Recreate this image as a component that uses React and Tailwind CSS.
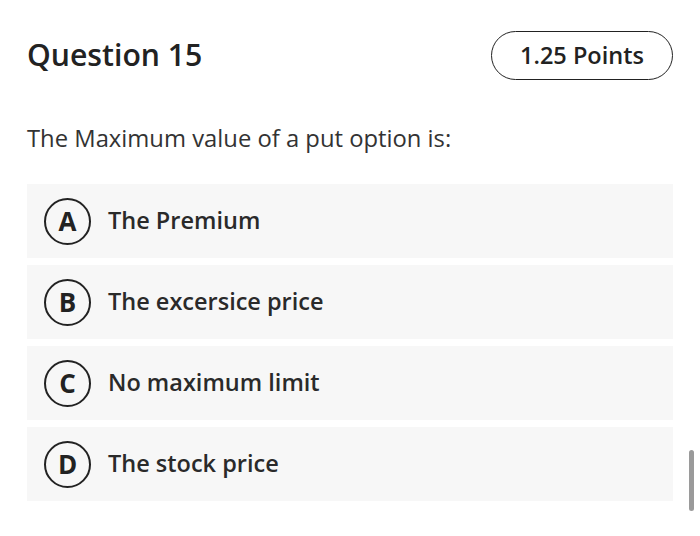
import React from "react";

const options = [
  { letter: "A", text: "The Premium" },
  { letter: "B", text: "The excersice price" },
  { letter: "C", text: "No maximum limit" },
  { letter: "D", text: "The stock price" },
];

const App = () => {
  return (
    <div
      className="relative w-[700px] h-[536px] bg-white overflow-hidden text-[#222]"
      style={{ fontFamily: '"Open Sans", "Noto Sans", sans-serif' }}
    >
      <div className="px-[27px] pt-[31px]">
        <div className="flex items-center justify-between">
          <h1 className="text-[30.2px] font-semibold leading-none">Question 15</h1>
          <div className="h-[49px] w-[182px] rounded-full border-[1.8px] border-[#222] flex items-center justify-center text-[23.5px] font-semibold">
            1.25 Points
          </div>
        </div>

        <p className="mt-[42px] text-[23.8px] leading-[32px] text-[#333]">
          The Maximum value of a put option is:
        </p>

        <div className="mt-[30px] flex flex-col gap-[7px]">
          {options.map((o) => (
            <div
              key={o.letter}
              className="h-[74px] w-[646px] bg-[#f7f7f7] flex items-center pl-[17px]"
            >
              <div className="w-[47px] h-[47px] rounded-full border-[2.8px] border-[#222] flex items-center justify-center text-[26px] font-bold leading-none">
                {o.letter}
              </div>
              <span className="ml-[17px] text-[23.5px] font-semibold text-[#2a2a2a]">{o.text}</span>
            </div>
          ))}
        </div>
      </div>

      <div className="absolute left-[689px] top-[450px] w-[5px] h-[61px] rounded-full bg-[#9a9a9a]" />
    </div>
  );
};

export default App;
